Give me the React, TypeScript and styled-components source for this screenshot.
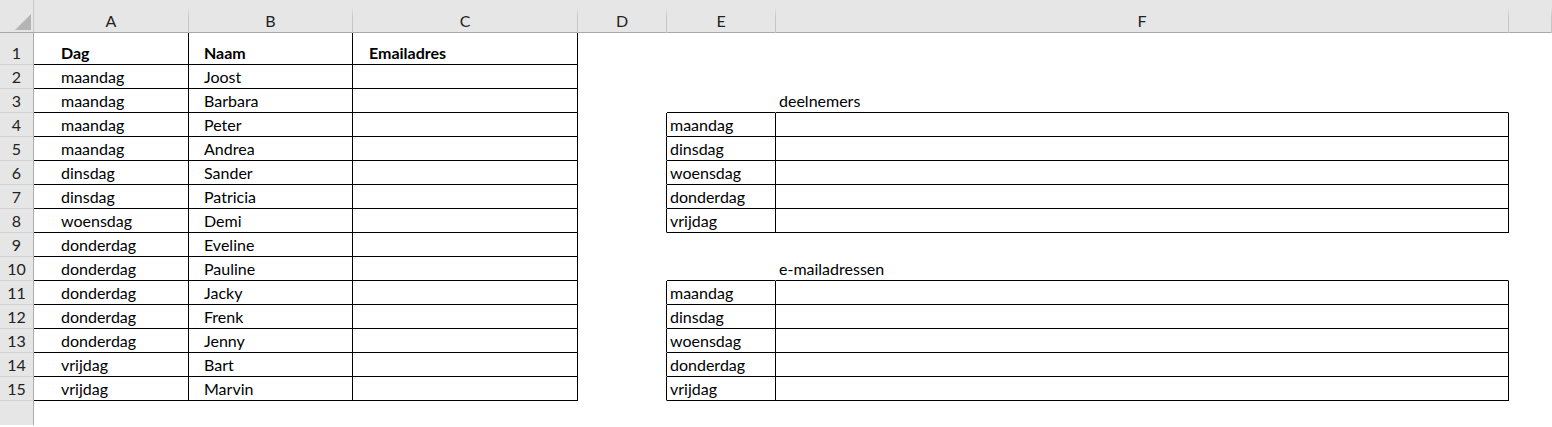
import styled, { createGlobalStyle } from "styled-components";

const GlobalStyle = createGlobalStyle`
  html, body {
    margin: 0;
    padding: 0;
    background: #ffffff;
  }
  body {
    font-family: Lato, "Open Sans", "Liberation Sans", sans-serif;
    font-size: 16px;
    color: #000;
    overflow: hidden;
  }
`;

const Sheet = styled.div`
  display: grid;
  grid-template-columns: 34px 155px 164px 225px 89px 109px 733px 1fr;
  grid-template-rows: 33px 32px repeat(15, 24px);
  width: 1552px;
  height: 427px;
  overflow: hidden;
  background: #fff;
`;

const Corner = styled.div`
  display: flex;
  align-items: flex-end;
  justify-content: flex-end;
  padding: 0 3px 3px 0;
  background: #e6e6e6;
  box-shadow: inset 0 -1px 0 #a8a8a8, inset -1px 0 0 #c8c8c8;
`;

const ColHead = styled.div`
  display: flex;
  align-items: flex-end;
  justify-content: center;
  padding-bottom: 4px;
  line-height: 16px;
  background: #e6e6e6;
  color: #222;
  border-right: 1px solid;
  border-image: linear-gradient(to bottom, rgba(200, 200, 200, 0) 20%, #c6c6c6 55%) 1;
  box-shadow: inset 0 -1px 0 #a8a8a8;
`;

const RowHead = styled.div`
  display: flex;
  align-items: flex-end;
  justify-content: center;
  padding-bottom: 3px;
  line-height: 16px;
  background: #e6e6e6;
  color: #222;
  border-right: 1px solid #ababab;
  border-bottom: 1px solid #d2d2d2;
`;

const RowFill = styled.div`
  grid-column: 1;
  background: #e6e6e6;
  border-right: 1px solid #ababab;
`;

const Cell = styled.div<{ $right?: boolean; $bottom?: boolean; $pad: number; $bold?: boolean }>`
  display: flex;
  align-items: flex-end;
  padding: 0 0 3px ${(p) => p.$pad}px;
  line-height: 16px;
  white-space: nowrap;
  font-weight: ${(p) => (p.$bold ? 700 : 400)};
  border-right: 1px solid ${(p) => (p.$right ? "#000" : "transparent")};
  border-bottom: 1px solid ${(p) => (p.$bottom ? "#000" : "transparent")};
`;

const columns = ["A", "B", "C", "D", "E", "F", ""];
const pads = [27, 15, 16, 3, 3, 3, 3];

const names: [string, string][] = [
  ["maandag", "Joost"],
  ["maandag", "Barbara"],
  ["maandag", "Peter"],
  ["maandag", "Andrea"],
  ["dinsdag", "Sander"],
  ["dinsdag", "Patricia"],
  ["woensdag", "Demi"],
  ["donderdag", "Eveline"],
  ["donderdag", "Pauline"],
  ["donderdag", "Jacky"],
  ["donderdag", "Frenk"],
  ["donderdag", "Jenny"],
  ["vrijdag", "Bart"],
  ["vrijdag", "Marvin"],
];

const days = ["maandag", "dinsdag", "woensdag", "donderdag", "vrijdag"];

const inBlock = (row: number) => (row >= 4 && row <= 8) || (row >= 11 && row <= 15);

const cellText = (row: number, col: number): string => {
  if (row === 1) return ["Dag", "Naam", "Emailadres"][col] || "";
  if (col === 0 && row <= 15) return names[row - 2][0];
  if (col === 1 && row <= 15) return names[row - 2][1];
  if (col === 5 && row === 3) return "deelnemers";
  if (col === 5 && row === 10) return "e-mailadressen";
  if (col === 4 && inBlock(row)) return days[(row >= 11 ? row - 11 : row - 4)];
  return "";
};

const hasRight = (row: number, col: number) => {
  if (col <= 2) return true;
  if (inBlock(row) && col >= 3 && col <= 5) return true;
  return false;
};

const hasBottom = (row: number, col: number) => {
  if (col <= 2) return true;
  if ((col === 4 || col === 5) && (inBlock(row) || row === 3 || row === 10)) return true;
  return false;
};

const CornerMark = () => (
  <svg width="16" height="16" viewBox="0 0 16 16">
    <polygon points="16,0 16,16 0,16" fill="#b4b4b4" />
  </svg>
);

export default function App() {
  const rows = Array.from({ length: 15 }, (_, i) => i + 1);
  return (
    <>
      <GlobalStyle />
      <Sheet>
        <Corner>
          <CornerMark />
        </Corner>
        {columns.map((c, i) => (
          <ColHead key={"h" + i}>{c}</ColHead>
        ))}
        {rows.map((r) => [
          <RowHead key={"r" + r}>{r}</RowHead>,
          ...columns.map((_, c) => (
            <Cell
              key={r + "-" + c}
              $pad={pads[c]}
              $bold={r === 1}
              $right={hasRight(r, c)}
              $bottom={hasBottom(r, c)}
            >
              {cellText(r, c)}
            </Cell>
          )),
        ])}
        <RowFill />
      </Sheet>
    </>
  );
}
